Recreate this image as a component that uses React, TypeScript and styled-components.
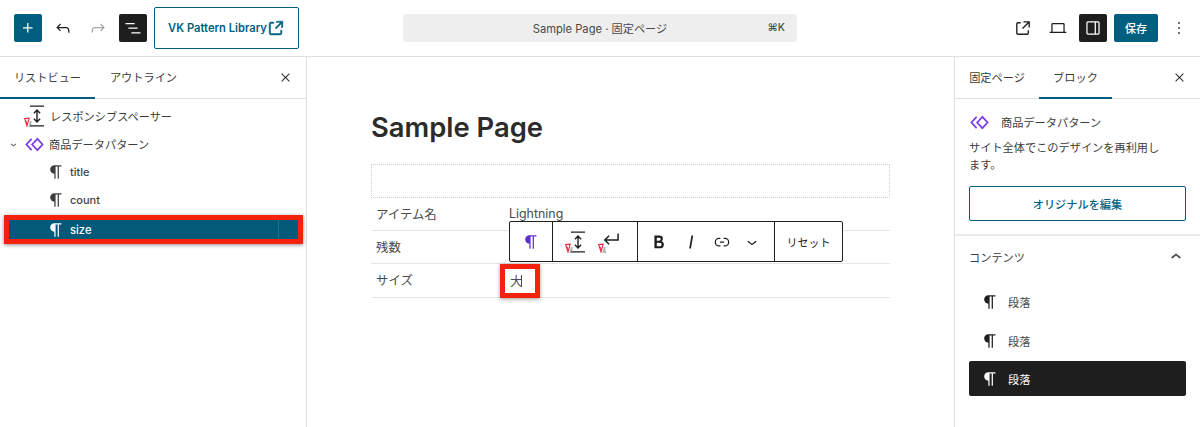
import React from "react";
import styled, { createGlobalStyle } from "styled-components";

const GlobalStyle = createGlobalStyle`
  html, body {
    margin: 0;
    padding: 0;
    height: 427px;
    overflow: hidden;
    background: #fff;
  }
  * {
    box-sizing: border-box;
  }
`;

const ACCENT = "#005f7f";
const DARK = "#1e1e1e";
const LINE = "#e0e0e0";
const RED = "#f5210f";

const Page = styled.div`
  width: 1200px;
  height: 427px;
  display: flex;
  flex-direction: column;
  overflow: hidden;
  color: #3c3c3c;
  font-family: Inter, "Noto Sans CJK JP", sans-serif;
  font-size: 11.2px;
`;

const TopBar = styled.header`
  flex: 0 0 57px;
  display: grid;
  grid-template-columns: 285px 394px 1fr;
  column-gap: 104px;
  align-items: center;
  padding: 0 7px 1px 14px;
  border-bottom: 1px solid ${LINE};
`;

const BarGroup = styled.div<{ $end?: boolean }>`
  display: flex;
  align-items: center;
  justify-content: ${({ $end }) => ($end ? "flex-end" : "flex-start")};
`;

const IconButton = styled.div<{ $variant?: "accent" | "dark"; $muted?: boolean; $gap?: number }>`
  flex: none;
  width: 28px;
  height: 28px;
  margin-left: ${({ $gap }) => $gap ?? 0}px;
  display: flex;
  align-items: center;
  justify-content: center;
  border-radius: 2px;
  background: ${({ $variant }) =>
    $variant === "accent" ? ACCENT : $variant === "dark" ? DARK : "transparent"};
  color: ${({ $variant, $muted }) => ($variant ? "#fff" : $muted ? "#a8a8a8" : DARK)};
`;

const Glyph = styled.svg<{ $size?: number; $heavy?: boolean }>`
  display: block;
  flex: none;
  width: ${({ $size }) => $size ?? 20}px;
  height: ${({ $size }) => $size ?? 20}px;
  fill: currentColor;
  stroke: ${({ $heavy }) => ($heavy ? "currentColor" : "none")};
  stroke-width: 0.5;
`;

const LibraryButton = styled.div`
  margin-left: 7px;
  width: 145px;
  height: 42px;
  display: flex;
  align-items: center;
  justify-content: center;
  padding-right: 2px;
  border: 1px solid ${ACCENT};
  border-radius: 2px;
  color: ${ACCENT};
  font-size: 11.2px;
  font-weight: 600;
`;

const LibraryIcon = styled.span`
  display: block;
  margin: 0 -4px 0 -2px;
`;

const CommandBar = styled.div`
  position: relative;
  height: 28px;
  display: flex;
  align-items: center;
  justify-content: center;
  border-radius: 3px;
  background: #eeeeee;
  font-size: 11.2px;
  color: #4a4a4a;
`;

const Shortcut = styled.span`
  position: absolute;
  right: 12px;
  top: 7px;
  font-size: 10.5px;
  font-weight: 500;
`;

const SaveButton = styled.div`
  margin: 0 7px;
  width: 44px;
  height: 28px;
  display: flex;
  align-items: center;
  justify-content: center;
  border-radius: 2px;
  background: ${ACCENT};
  color: #fff;
  font-size: 11px;
  font-weight: 500;
`;

const Workspace = styled.div`
  flex: 1;
  min-height: 0;
  display: grid;
  grid-template-columns: 307px 1fr 246px;
`;

const LeftPanel = styled.aside`
  border-right: 1px solid ${LINE};
`;

const RightPanel = styled.aside`
  border-left: 1px solid ${LINE};
`;

const TabRow = styled.div`
  height: 42px;
  display: flex;
  align-items: stretch;
  padding-right: 14px;
  border-bottom: 1px solid ${LINE};
`;

const Tab = styled.div<{ $active?: boolean; $width: number }>`
  width: ${({ $width }) => $width}px;
  display: flex;
  align-items: center;
  justify-content: center;
  padding-bottom: 1px;
  white-space: nowrap;
  border-bottom: 2px solid ${({ $active }) => ($active ? ACCENT : "transparent")};
  margin-bottom: -1px;
`;

const CloseSlot = styled.div`
  margin-left: auto;
  display: flex;
  align-items: center;
  color: ${DARK};
`;

const Tree = styled.div`
  padding-top: 3px;
`;

const TreeRow = styled.div<{ $indent: number; $gap?: number }>`
  height: 28px;
  display: flex;
  align-items: center;
  gap: ${({ $gap }) => $gap ?? 4}px;
  padding-left: ${({ $indent }) => $indent}px;
  white-space: nowrap;
`;

const SelectedRow = styled.div`
  position: relative;
  height: 29px;
  margin: 1px 3px 0 4px;
  display: flex;
  align-items: center;
  gap: 4px;
  padding-left: 37px;
  background: #005a78;
  border: 5px solid ${RED};
  box-shadow: 0 1px 4px rgba(0, 0, 0, 0.45);
  color: #fff;
  font-weight: 500;
`;

const RowDivider = styled.span`
  position: absolute;
  top: 0;
  bottom: 0;
  right: 19px;
  width: 1px;
  background: rgba(255, 255, 255, 0.14);
`;

const MarkedIcon = styled.span`
  position: relative;
  flex: none;
  display: block;
  color: ${DARK};
`;

const Mark = styled.svg`
  position: absolute;
  left: -1px;
  bottom: 1px;
  width: 9px;
  height: 10px;
`;

const LatinLabel = styled.span`
  font-weight: 500;
  color: #444;
  font-size: 11px;
`;

const Canvas = styled.main`
  padding: 51px 64px 0;
`;

const PageTitle = styled.h1`
  margin: 0 0 18px;
  font-size: 27.4px;
  line-height: 38px;
  font-weight: 600;
  color: #2b2b2b;
`;

const DashedBox = styled.div`
  height: 34px;
  border: 1px dotted #cfcfcf;
`;

const TableArea = styled.div`
  position: relative;
`;

const TableRow = styled.div<{ $height: number }>`
  height: ${({ $height }) => $height}px;
  display: grid;
  grid-template-columns: 133px 1fr;
  align-items: center;
  padding: 0 0 1px 5px;
  border-bottom: 1px solid #e6e6e6;
  font-size: 12.4px;
  color: #4a4a4a;
`;

const ValueCell = styled.span`
  font-size: 12.4px;
`;

const ValueMarker = styled.span`
  position: absolute;
  left: 129px;
  top: 66px;
  width: 40px;
  height: 34px;
  display: flex;
  align-items: center;
  padding-left: 5px;
  background: #fff;
  border: 5px solid ${RED};
  box-shadow: 0 1px 4px rgba(0, 0, 0, 0.4);
  font-size: 12.4px;
  color: #4a4a4a;
`;

const Caret = styled.span`
  width: 1px;
  height: 12px;
  margin-left: -1px;
  background: #4a4a4a;
`;

const FloatingToolbar = styled.div`
  position: absolute;
  left: 138px;
  top: 23px;
  height: 41px;
  display: flex;
  background: #fff;
  border: 1px solid ${DARK};
  border-radius: 2px;
`;

const ToolGroup = styled.div<{ $width: number; $gap?: number; $last?: boolean; $shift?: number }>`
  width: ${({ $width }) => $width}px;
  display: flex;
  align-items: center;
  justify-content: center;
  gap: ${({ $gap }) => $gap ?? 0}px;
  padding-right: ${({ $shift }) => $shift ?? 0}px;
  border-right: ${({ $last }) => ($last ? "none" : `1px solid ${DARK}`)};
  color: ${DARK};
  font-size: 11px;
`;

const PurpleTint = styled.span`
  display: block;
  color: #5b2fd6;
`;

const BlockCard = styled.section`
  padding: 12px 14px 13px;
  border-bottom: 2px solid #ececec;
`;

const BlockName = styled.div`
  height: 22px;
  display: flex;
  align-items: center;
  gap: 12px;
  padding-left: 1px;
`;

const BlockText = styled.p`
  margin: 7px 0 12px;
  max-width: 196px;
  font-size: 11.2px;
  line-height: 17px;
`;

const EditButton = styled.div`
  height: 35px;
  display: flex;
  align-items: center;
  justify-content: center;
  border: 1px solid ${ACCENT};
  border-radius: 2px;
  color: ${ACCENT};
  font-weight: 500;
`;

const ContentSection = styled.section`
  padding: 0 14px;
`;

const SectionHead = styled.div`
  height: 42px;
  display: flex;
  align-items: center;
  justify-content: space-between;
  margin-bottom: 6px;
  color: #3c3c3c;
`;

const ContentItem = styled.div<{ $selected?: boolean }>`
  height: 35px;
  margin-top: ${({ $selected }) => ($selected ? 3 : 4)}px;
  display: flex;
  align-items: center;
  gap: 8px;
  padding-left: 11px;
  border-radius: 2px;
  background: ${({ $selected }) => ($selected ? DARK : "transparent")};
  color: ${({ $selected }) => ($selected ? "#fff" : "#444")};
`;

const ContentIcon = styled.span<{ $selected?: boolean }>`
  display: block;
  color: ${({ $selected }) => ($selected ? "#fff" : DARK)};
`;

const PATHS = {
  plus: "M11 12.5V17.5H12.5V12.5H17.5V11H12.5V6H11V11H6V12.5H11Z",
  undo: "M18.3 11.7c-.6-.6-1.4-.9-2.3-.9H6.7l2.9-3.3-1.1-1-4.5 5L8.5 16l1-1-2.7-2.7H16c.5 0 .9.2 1.3.5 1 1 1 3.4 1 4.5v.3h1.5v-.2c0-1.5 0-4.3-1.5-5.7z",
  redo: "M15.6 6.5l-1.1 1 2.9 3.3H8c-.9 0-1.7.3-2.3.9-1.4 1.5-1.4 4.2-1.4 5.6v.2h1.5v-.3c0-1.1 0-3.5 1-4.5.3-.3.7-.5 1.3-.5h9.2L14.5 15l1.1 1.1 4.6-4.6-4.6-5z",
  listView: "M3 6h11v1.5H3V6Zm3.5 5.5h11V13h-11v-1.5ZM21 17H10v1.5h11V17Z",
  external:
    "M19.5 4.5h-7V6h4.44l-5.97 5.97 1.06 1.06L18 7.06v4.44h1.5v-7Zm-13 1a2 2 0 0 0-2 2v10a2 2 0 0 0 2 2h10a2 2 0 0 0 2-2v-3H17v3a.5.5 0 0 1-.5.5h-10a.5.5 0 0 1-.5-.5v-10a.5.5 0 0 1 .5-.5h3V5.5h-3Z",
  laptop:
    "M5.5 6h13A1.5 1.5 0 0 1 20 7.5v9h2V18H2v-1.5h2v-9A1.5 1.5 0 0 1 5.5 6Zm0 1.5v9h13v-9h-13Z",
  sidebar:
    "M18 4H6a2 2 0 0 0-2 2v12a2 2 0 0 0 2 2h12a2 2 0 0 0 2-2V6a2 2 0 0 0-2-2ZM5.5 18V6a.5.5 0 0 1 .5-.5h8v13H6a.5.5 0 0 1-.5-.5Zm13 0a.5.5 0 0 1-.5.5h-2.5v-13H18a.5.5 0 0 1 .5.5v12Z",
  more: "M13 19h-2v-2h2v2zm0-6h-2v-2h2v2zm0-6h-2V5h2v2z",
  close:
    "m13.06 12 6.47-6.47-1.06-1.06L12 10.94 5.53 4.47 4.47 5.53 10.94 12l-6.47 6.47 1.06 1.06L12 13.06l6.47 6.47 1.06-1.06L13.06 12Z",
  chevronDown: "M17.5 11.6L12 16l-5.5-4.4.9-1.2L12 14l4.5-3.6 1 1.2z",
  chevronUp: "M6.5 12.4L12 8l5.5 4.4-.9 1.2L12 10l-4.5 3.6-1-1.2z",
  paragraph:
    "m9.99609 14v-.2251l.00391.0001v6.225h1.5v-14.5h2.5v14.5h1.5v-14.5h3v-1.5h-8.50391c-2.76142 0-5 2.23858-5 5 0 2.7614 2.23858 5 5 5z",
  bold: "M14.7 11.3c1-.6 1.5-1.6 1.5-3 0-2.3-1.3-3.4-4-3.4H7v14h5.8c1.4 0 2.5-.3 3.3-1 .8-.7 1.2-1.7 1.2-2.9.1-1.9-.8-3.1-2.6-3.7zm-5.1-4h2.3c.6 0 1.1.1 1.4.4.3.3.5.7.5 1.2s-.2 1-.5 1.2c-.3.3-.8.4-1.4.4H9.6V7.3zm4.6 9c-.4.3-1 .4-1.7.4H9.6v-3.9h2.9c.7 0 1.3.2 1.7.5.4.3.6.8.6 1.5s-.2 1.2-.6 1.5z",
  italic: "M12.5 5L10 19h1.9l2.5-14z",
  link: "M10 17.389H8.444A5.194 5.194 0 1 1 8.444 7H10v1.5H8.444a3.694 3.694 0 0 0 0 7.389H10v1.5ZM14 7h1.556a5.194 5.194 0 0 1 0 10.39H14v-1.5h1.556a3.694 3.694 0 0 0 0-7.39H14V7Zm-4.5 6h5v-1.5h-5V13Z",
  spacer:
    "M5 1.5h14v1.3H5V1.5Zm0 19.7h14v1.3H5v-1.3ZM12 5l3.6 3.8-1 .9-1.9-2v8.6l1.9-2 1 .9L12 19l-3.6-3.8 1-.9 1.9 2V7.7l-1.9 2-1-.9L12 5Z",
  enter:
    "M19.8 3.5v7.3H7.6l3 3-1 1L4.8 10l4.8-4.8 1 1-3 3.1h10.7V3.5z",
};

const Icon = ({ name, size, heavy }: { name: keyof typeof PATHS; size?: number; heavy?: boolean }) => (
  <Glyph viewBox="0 0 24 24" $size={size} $heavy={heavy}>
    <path d={PATHS[name]} />
  </Glyph>
);

const PatternIcon = () => (
  <svg viewBox="0 0 20 20" width="19" height="19" fill="none" stroke="#7c3aed" strokeWidth="1.8">
    <path d="M7 4 1.5 10 7 16" />
    <path d="M13 4 7.5 10 13 16 18.5 10Z" />
  </svg>
);

const RedMark = () => (
  <Mark viewBox="0 0 9 10" fill="none">
    <path d="M.7 1.5 3 9 5.2 1.2Z" stroke="#ea2a3f" strokeWidth="1.1" />
    <path d="M2 3.6 3.1 7" stroke="#ea2a3f" strokeWidth="1" />
    <path d="M5.6 5h2M5 7h2.4M4.6 9h3.6" stroke="#6e6e6e" strokeWidth="1.1" />
  </Mark>
);

const MarkedGlyph = ({ name, size }: { name: keyof typeof PATHS; size: number }) => (
  <MarkedIcon>
    <Icon name={name} size={size} />
    <RedMark />
  </MarkedIcon>
);

export default function App() {
  return (
    <Page>
      <GlobalStyle />
      <TopBar>
        <BarGroup>
          <IconButton $variant="accent">
            <Icon name="plus" />
          </IconButton>
          <IconButton $gap={7}>
            <Icon name="undo" />
          </IconButton>
          <IconButton $gap={7} $muted>
            <Icon name="redo" />
          </IconButton>
          <IconButton $gap={7} $variant="dark">
            <Icon name="listView" />
          </IconButton>
          <LibraryButton>
            VK Pattern Library
            <LibraryIcon>
              <Icon name="external" size={22} heavy />
            </LibraryIcon>
          </LibraryButton>
        </BarGroup>
        <CommandBar>
          Sample Page · 固定ページ
          <Shortcut>⌘K</Shortcut>
        </CommandBar>
        <BarGroup $end>
          <IconButton>
            <Icon name="external" size={22} />
          </IconButton>
          <IconButton $gap={7}>
            <Icon name="laptop" />
          </IconButton>
          <IconButton $gap={7} $variant="dark">
            <Icon name="sidebar" />
          </IconButton>
          <SaveButton>保存</SaveButton>
          <IconButton>
            <Icon name="more" />
          </IconButton>
        </BarGroup>
      </TopBar>
      <Workspace>
        <LeftPanel>
          <TabRow>
            <Tab $active $width={95}>リストビュー</Tab>
            <Tab $width={97}>アウトライン</Tab>
            <CloseSlot>
              <Icon name="close" size={13} heavy />
            </CloseSlot>
          </TabRow>
          <Tree>
            <TreeRow $indent={25} $gap={1}>
              <MarkedGlyph name="spacer" size={24} />
              レスポンシブスペーサー
            </TreeRow>
            <TreeRow $indent={8} $gap={5.5}>
              <Icon name="chevronDown" size={11} heavy />
              <PatternIcon />
              <span>商品データパターン</span>
            </TreeRow>
            <TreeRow $indent={46}>
              <Icon name="paragraph" />
              <LatinLabel>title</LatinLabel>
            </TreeRow>
            <TreeRow $indent={46}>
              <Icon name="paragraph" />
              <LatinLabel>count</LatinLabel>
            </TreeRow>
            <SelectedRow>
              <Icon name="paragraph" />
              <span>size</span>
              <RowDivider />
            </SelectedRow>
          </Tree>
        </LeftPanel>
        <Canvas>
          <PageTitle>Sample Page</PageTitle>
          <DashedBox />
          <TableArea>
            <TableRow $height={33}>
              <span>アイテム名</span>
              <ValueCell>Lightning</ValueCell>
            </TableRow>
            <TableRow $height={33}>
              <span>残数</span>
            </TableRow>
            <TableRow $height={34}>
              <span>サイズ</span>
            </TableRow>
            <ValueMarker>
              大
              <Caret />
            </ValueMarker>
            <FloatingToolbar>
              <ToolGroup $width={43}>
                <PurpleTint>
                  <Icon name="paragraph" />
                </PurpleTint>
              </ToolGroup>
              <ToolGroup $width={85} $gap={9} $shift={2}>
                <MarkedGlyph name="spacer" size={24} />
                <MarkedGlyph name="enter" size={24} />
              </ToolGroup>
              <ToolGroup $width={137} $gap={10} $shift={2}>
                <Icon name="bold" size={22} />
                <Icon name="italic" size={22} />
                <Icon name="link" size={20} />
                <Icon name="chevronDown" size={20} />
              </ToolGroup>
              <ToolGroup $width={67} $last>
                リセット
              </ToolGroup>
            </FloatingToolbar>
          </TableArea>
        </Canvas>
        <RightPanel>
          <TabRow>
            <Tab $width={84}>固定ページ</Tab>
            <Tab $active $width={73}>ブロック</Tab>
            <CloseSlot>
              <Icon name="close" size={13} heavy />
            </CloseSlot>
          </TabRow>
          <BlockCard>
            <BlockName>
              <PatternIcon />
              商品データパターン
            </BlockName>
            <BlockText>サイト全体でこのデザインを再利用します。</BlockText>
            <EditButton>オリジナルを編集</EditButton>
          </BlockCard>
          <ContentSection>
            <SectionHead>
              コンテンツ
              <Icon name="chevronUp" size={20} heavy />
            </SectionHead>
            <ContentItem>
              <ContentIcon>
                <Icon name="paragraph" />
              </ContentIcon>
              段落
            </ContentItem>
            <ContentItem>
              <ContentIcon>
                <Icon name="paragraph" />
              </ContentIcon>
              段落
            </ContentItem>
            <ContentItem $selected>
              <ContentIcon $selected>
                <Icon name="paragraph" />
              </ContentIcon>
              段落
            </ContentItem>
          </ContentSection>
        </RightPanel>
      </Workspace>
    </Page>
  );
}
